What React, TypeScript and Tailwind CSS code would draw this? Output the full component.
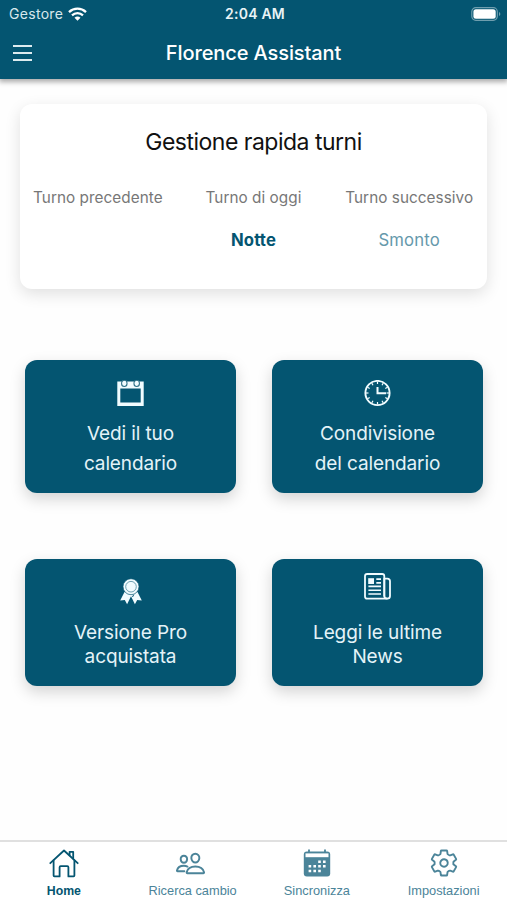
import type { ReactNode } from "react";
import { IoPeopleOutline, IoSettingsOutline } from "react-icons/io5";

export default function App() {
  return (
    <div className="flex h-[900px] w-[507px] flex-col overflow-hidden bg-[#fefefe] font-['Inter',sans-serif]">
      {/* Header */}
      <header className="h-[79px] shrink-0 bg-[#045571] text-white shadow-[0_2px_5px_1px_rgba(0,0,0,0.33)]">
        <div className="grid h-[27px] grid-cols-3 items-center pl-[9px] pr-[6px]">
          <div className="flex items-center gap-[5px] text-[14px] tracking-[0.3px] text-[#d8e8ed]">
            Gestore
            <WifiIcon />
          </div>
          <span className="text-center text-[14px] font-semibold tracking-[0.2px] text-[#e8f3f6]">2:04 AM</span>
          <div className="flex justify-end">
            <BatteryIcon />
          </div>
        </div>
        <div className="grid h-[51px] grid-cols-[40px_1fr_40px] items-center">
          <button aria-label="Menu" className="ml-[13px] flex w-[19px] flex-col gap-[5px]">
            <span className="h-[2px] bg-[#dcebef]" />
            <span className="h-[2px] bg-[#dcebef]" />
            <span className="h-[2px] bg-[#dcebef]" />
          </button>
          <h1 className="text-center text-[20px] font-medium tracking-[-0.1px]">Florence Assistant</h1>
        </div>
      </header>

      <main className="flex-1">
        {/* Shifts */}
        <section className="mx-5 mt-[25px] h-[185px] rounded-xl bg-white pt-[21px] shadow-[0_5px_16px_rgba(0,0,0,0.12)]">
          <h2 className="text-center text-[23px] leading-[34px] tracking-[-0.5px] text-[#111]">Gestione rapida turni</h2>
          <div className="mt-[28px] grid grid-cols-3 text-center text-[15.3px] leading-[21px] tracking-[0.05px] text-[#777]">
            <span>Turno precedente</span>
            <span>Turno di oggi</span>
            <span>Turno successivo</span>
          </div>
          <div className="mt-[22px] grid grid-cols-3 text-center text-[16.7px] leading-5 tracking-[0.15px]">
            <span />
            <span className="font-bold text-[#045571]">Notte</span>
            <span className="text-[#6598ab]">Smonto</span>
          </div>
        </section>

        {/* Actions */}
        <div className="mt-[71px] grid grid-cols-2 gap-x-9 pl-[25px] pr-6">
          <Tile icon={<CalendarIcon />} className="h-[133px] pt-[20px]" textClass="mt-[11.5px] leading-[30.5px]">
            Vedi il tuo
            <br />
            calendario
          </Tile>
          <Tile icon={<ClockIcon />} className="h-[133px] pt-[20px]" textClass="mt-[11.5px] leading-[30.5px]">
            Condivisione
            <br />
            del calendario
          </Tile>
        </div>
        <div className="mt-[66px] grid grid-cols-2 gap-x-9 pl-[25px] pr-6">
          <Tile icon={<RibbonIcon />} className="h-[127px] pt-[19px]" textClass="mt-[15.5px] leading-[24.5px]">
            Versione Pro
            <br />
            acquistata
          </Tile>
          <Tile icon={<NewsIcon />} className="h-[127px] pt-[14px]" textClass="mt-[20.5px] leading-[24.5px]">
            Leggi le ultime
            <br />
            News
          </Tile>
        </div>
      </main>

      {/* Tab bar */}
      <nav className="grid h-[60px] shrink-0 grid-cols-4 border-t-2 border-[#e0e0e0] bg-white font-['Liberation_Sans',sans-serif] text-[12.8px] text-[#4b8499]">
        <TabItem label="Home" className="pl-px text-[12.3px] font-bold text-[#045571]">
          <HomeIcon />
        </TabItem>
        <TabItem label="Ricerca cambio" className="pl-[5px]">
          <IoPeopleOutline size={31} className="mr-[4px]" />
        </TabItem>
        <TabItem label="Sincronizza">
          <SyncCalendarIcon />
        </TabItem>
        <TabItem label="Impostazioni">
          <IoSettingsOutline size={30} />
        </TabItem>
      </nav>
    </div>
  );
}

type TileProps = { icon: ReactNode; className: string; textClass: string; children: ReactNode };

function Tile({ icon, className, textClass, children }: TileProps) {
  return (
    <button
      className={`flex flex-col items-center rounded-xl bg-[#045571] text-[#e4f3f8] shadow-[0_6px_15px_rgba(0,0,0,0.17)] ${className}`}
    >
      {icon}
      <span className={`text-[19px] tracking-[-0.12px] ${textClass}`}>{children}</span>
    </button>
  );
}

function TabItem({ label, className = "", children }: { label: string; className?: string; children: ReactNode }) {
  return (
    <button className={`flex flex-col items-center pt-[6px] ${className}`}>
      <span className="flex h-[30px] items-center">{children}</span>
      <span className="mt-[5px] leading-4">{label}</span>
    </button>
  );
}

function WifiIcon() {
  return (
    <svg width="19" height="14" viewBox="0 0 19 14" fill="none" stroke="white" strokeWidth="2.3">
      <path d="M1 5.1C5.8.5 13.2.5 18 5.1" />
      <path d="M4 8.3c3.2-3 7.8-3 11 0" />
      <path d="M9.5 13.7 6.5 10.8c1.7-1.6 4.3-1.6 6 0Z" fill="white" stroke="none" />
    </svg>
  );
}

function BatteryIcon() {
  return (
    <svg width="30" height="14" viewBox="0 0 30 14" fill="none">
      <rect x=".8" y=".7" width="25.5" height="12.6" rx="4" stroke="#6f9eae" strokeWidth="1.2" />
      <rect x="2.4" y="2.3" width="22.3" height="9.4" rx="2.5" fill="white" />
      <path d="M28 5v4c1.8-.7 1.8-3.3 0-4Z" fill="#6f9eae" />
    </svg>
  );
}

function CalendarIcon() {
  return (
    <svg width="27" height="27" viewBox="0 0 27 27">
      <path fillRule="evenodd" d="M.3 1.5h26.4V26H.3ZM3.3 8.6v14h20.4v-14Z" fill="#f1fcff" />
      <rect x="4.6" y=".3" width="5.4" height="6.2" rx="2.7" fill="#f1fcff" stroke="#2f7289" strokeWidth="1.1" />
      <rect x="17" y=".3" width="5.4" height="6.2" rx="2.7" fill="#f1fcff" stroke="#2f7289" strokeWidth="1.1" />
    </svg>
  );
}

function ClockIcon() {
  return (
    <svg width="27" height="27" viewBox="0 0 27 27" fill="none" stroke="#f1fcff">
      <circle cx="13.5" cy="13" r="12.1" strokeWidth="1.9" />
      {[0, 30, 60, 90, 120, 150, 180, 210, 240, 270, 300, 330].map((a) => (
        <path key={a} d="M13.5 1.5V4" strokeWidth="1.2" transform={`rotate(${a} 13.5 13)`} />
      ))}
      <path d="M13.5 7v6.2H22" strokeWidth="2" />
    </svg>
  );
}

function RibbonIcon() {
  return (
    <svg width="24" height="27" viewBox="0 0 24 27" fill="#f1fcff">
      <path d="m5.5 14-4.3 8.6 4.6-.5 2.3 4.2 3.9-8.1 3.9 8.1 2.3-4.2 4.6.5L18.5 14Z" />
      <path d="m13.5 19 1.2-2.3" stroke="#045571" />
      <circle cx="12" cy="8.7" r="8" stroke="#045571" strokeWidth=".7" />
      <circle cx="12" cy="8.7" r="5.3" stroke="#4f8b9f" strokeWidth=".8" />
    </svg>
  );
}

function NewsIcon() {
  return (
    <svg width="27" height="27" viewBox="0 0 27 27" fill="none" stroke="#f1fcff" strokeWidth="1.8">
      <path d="M20.3 23.5V3.2c0-1.3-.9-2.2-2.2-2.2H3.2C1.9 1 1 1.9 1 3.2v20.3c0 1.3.9 2.2 2.2 2.2h20.2" />
      <path d="M20.3 5.6h3c1.6 0 2.7 1.1 2.7 2.7v14.8c0 1.5-1.1 2.6-2.7 2.6-1.8 0-3-1.1-3-2.6Z" />
      <path d="M4.2 5.2h5.8V11H4.2Z" fill="#f1fcff" stroke="none" />
      <path d="M12.3 6.1H17M12.3 9.9H17M4.4 13.4H17M4.4 17.2H17M4.4 21H17" strokeWidth="1.6" />
    </svg>
  );
}

function HomeIcon() {
  return (
    <svg
      width="30"
      height="30"
      viewBox="0 0 30 30"
      fill="none"
      stroke="currentColor"
      strokeWidth="1.8"
      strokeLinecap="round"
      strokeLinejoin="round"
    >
      <path d="M1.3 15.2 15 2.5l13.7 12.7" />
      <path d="M4.6 12.5v15.1c0 .5.3.8.8.8h5.2v-9.2c0-.6.5-1.1 1.1-1.1h6.6c.6 0 1.1.5 1.1 1.1v9.2h5.2c.5 0 .8-.3.8-.8V12.5" />
      <path d="M20.6 7.3V3.8h3.6v6.8" />
    </svg>
  );
}

function SyncCalendarIcon() {
  return (
    <svg width="28" height="28" viewBox="0 0 28 28">
      <rect x=".8" y="2.4" width="26.4" height="25" rx="3" fill="#4b8499" />
      <path d="M2.5 4.4h23v3.8h-23Z" fill="white" />
      <path d="M6 .6v3M22 .6v3" stroke="#4b8499" strokeWidth="1.8" />
      <path
        d="M15.2 11.4h2.6v2.6h-2.6ZM20 11.4h2.6v2.6H20ZM5.6 16h2.6v2.6H5.6ZM10.4 16H13v2.6h-2.6ZM15.2 16h2.6v2.6h-2.6ZM20 16h2.6v2.6H20ZM5.6 20.7h2.6v2.6H5.6ZM10.4 20.7H13v2.6h-2.6ZM15.2 20.7h2.6v2.6h-2.6Z"
        fill="white"
      />
    </svg>
  );
}
